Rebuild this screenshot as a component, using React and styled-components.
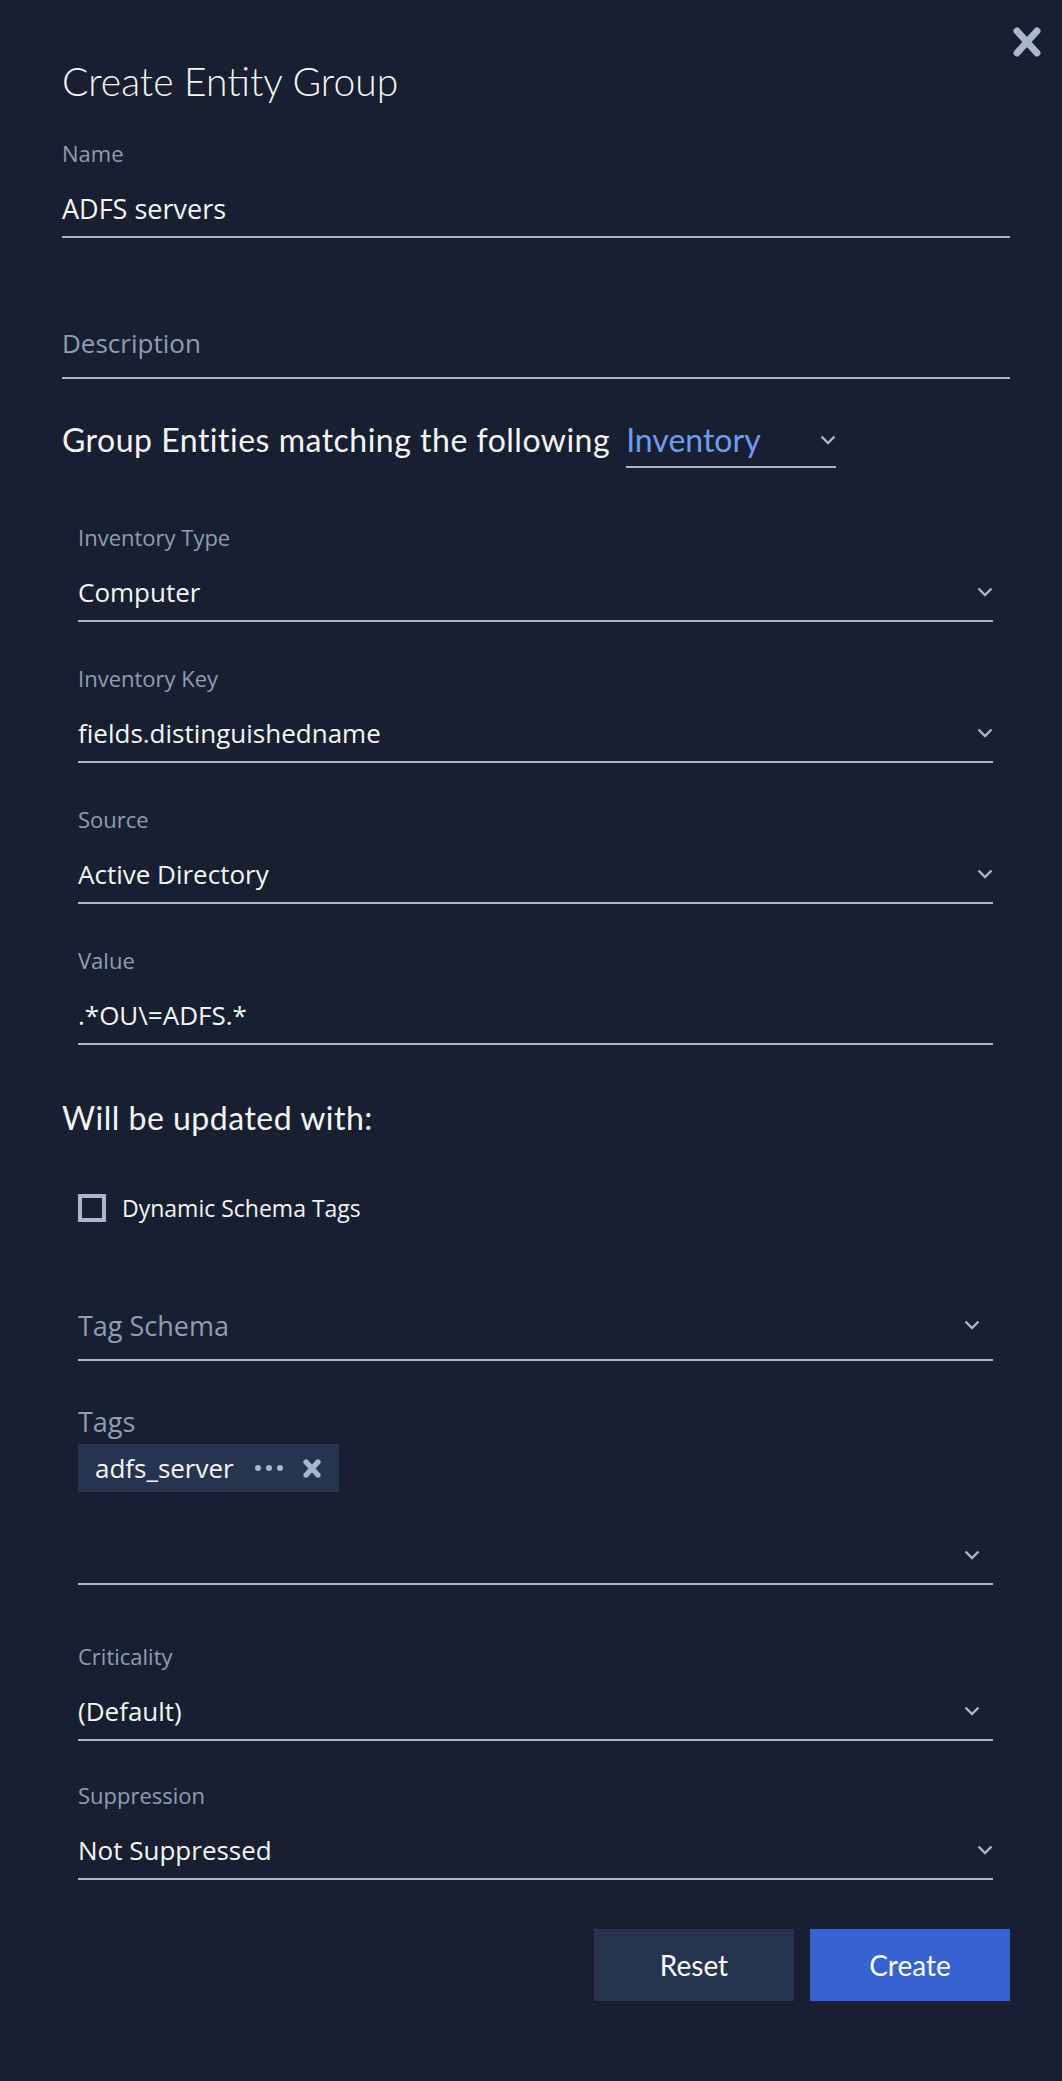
import styled, { createGlobalStyle } from "styled-components";

const GlobalStyle = createGlobalStyle`
  html, body {
    margin: 0;
    padding: 0;
    background: #181f30;
  }
  body {
    font-family: "Open Sans", Lato, sans-serif;
    color: #f4f6f9;
  }
`;

const Panel = styled.div`
  position: relative;
  box-sizing: border-box;
  width: 1062px;
  min-height: 2081px;
  padding: 57px 52px 80px 62px;
  background: #181f30;
`;

const CloseButton = styled.button`
  position: absolute;
  top: 26px;
  right: 20px;
  width: 30px;
  height: 32px;
  padding: 0;
  border: none;
  background: transparent;
  cursor: pointer;
`;

const Title = styled.h1`
  margin: 0;
  font-family: Lato, sans-serif;
  font-size: 39px;
  line-height: 48px;
  font-weight: 300;
  color: #f4f6f9;
`;

const Field = styled.div`
  margin-top: ${(p) => p.$mt ?? 43}px;
`;

const Label = styled.label`
  display: block;
  height: 26px;
  margin-bottom: 14px;
  font-size: 22px;
  line-height: 26px;
  color: #8e9eb4;
`;

const Control = styled.div`
  display: flex;
  align-items: center;
  justify-content: space-between;
  box-sizing: content-box;
  height: ${(p) => p.$h ?? 56}px;
  padding-bottom: ${(p) => p.$pb ?? 0}px;
  padding-right: ${(p) => p.$inset ?? 0}px;
  border-bottom: 2px solid #a8b7cb;
  font-size: ${(p) => p.$size ?? 26}px;
  color: ${(p) => (p.$placeholder ? "#8e9eb4" : "#f4f6f9")};
`;

const HeadingRow = styled.div`
  display: flex;
  align-items: flex-start;
  margin-top: 41px;
`;

const Heading = styled.h2`
  margin: ${(p) => p.$mt ?? 0}px 0 0;
  font-family: Lato, sans-serif;
  font-size: 32px;
  line-height: 40px;
  font-weight: 400;
  letter-spacing: 0.5px;
  color: #f4f6f9;
`;

const InlineSelect = styled.div`
  display: flex;
  align-items: center;
  justify-content: space-between;
  width: 210px;
  margin-left: 16px;
  padding-bottom: 6px;
  border-bottom: 2px solid #a8b7cb;
  font-family: Lato, sans-serif;
  font-size: 32px;
  line-height: 40px;
  color: #6e9cf0;
`;

const Indented = styled.div`
  padding: 0 17px 0 16px;
  margin-top: ${(p) => p.$mt ?? 0}px;
`;

const CheckRow = styled.label`
  display: flex;
  align-items: center;
  gap: 16px;
  height: 28px;
  margin-top: 56px;
  font-size: 23px;
  line-height: 28px;
  color: #f4f6f9;
`;

const CheckBox = styled.span`
  box-sizing: border-box;
  width: 28px;
  height: 28px;
  border: 4px solid #a8b7cb;
`;

const TagsLabel = styled.div`
  font-size: 27px;
  line-height: 30px;
  color: #8e9eb4;
`;

const Chip = styled.div`
  display: inline-flex;
  align-items: center;
  height: 48px;
  margin-top: 7px;
  padding: 0 18px 0 17px;
  background: #263450;
  font-size: 26px;
  color: #f4f6f9;
`;

const ChipDots = styled.span`
  display: flex;
  gap: 5px;
  margin: 0 20px 0 21px;

  i {
    width: 6px;
    height: 6px;
    border-radius: 50%;
    background: #a8b7cb;
  }
`;

const Actions = styled.div`
  display: flex;
  justify-content: flex-end;
  gap: 16px;
  margin-top: 49px;
`;

const Button = styled.button`
  width: 200px;
  height: 72px;
  border: none;
  font-family: Lato, sans-serif;
  font-size: 28px;
  color: #ffffff;
  background: ${(p) => (p.$primary ? "#3563d1" : "#263450")};
  cursor: pointer;
`;

function Chevron() {
  return (
    <svg width="16" height="10" viewBox="0 0 16 10">
      <polyline points="1.5,1.5 8,8 14.5,1.5" fill="none" stroke="#a8b7cb" strokeWidth="2.4" />
    </svg>
  );
}

function CrossIcon({ size = 30, height = 32, stroke = 7 }) {
  return (
    <svg width={size} height={height} viewBox="0 0 30 32">
      <path d="M5 5 L25 27 M25 5 L5 27" stroke="#a8b7cb" strokeWidth={stroke} strokeLinecap="round" />
    </svg>
  );
}

function SelectField({ label, value, placeholder, inset, mt }) {
  return (
    <Field $mt={mt}>
      <Label>{label}</Label>
      <Control $inset={inset} $placeholder={!value}>
        <span>{value || placeholder}</span>
        <Chevron />
      </Control>
    </Field>
  );
}

export default function App() {
  return (
    <>
      <GlobalStyle />
      <Panel>
        <CloseButton aria-label="Close">
          <CrossIcon />
        </CloseButton>
        <Title>Create Entity Group</Title>

        <Field $mt={35}>
          <Label>Name</Label>
          <Control $size={27}>ADFS servers</Control>
        </Field>

        <Field>
          <Label />
          <Control $placeholder $h={44} $pb={12}>Description</Control>
        </Field>

        <HeadingRow>
          <Heading>Group Entities matching the following</Heading>
          <InlineSelect>
            <span>Inventory</span>
            <Chevron />
          </InlineSelect>
        </HeadingRow>

        <Indented $mt={56}>
          <SelectField mt={0} label="Inventory Type" value="Computer" />
          <SelectField label="Inventory Key" value="fields.distinguishedname" />
          <SelectField label="Source" value="Active Directory" />
          <Field>
            <Label>Value</Label>
            <Control>.*OU\=ADFS.*</Control>
          </Field>
        </Indented>

        <Heading $mt={53}>Will be updated with:</Heading>

        <Indented>
          <CheckRow>
            <CheckBox />
            Dynamic Schema Tags
          </CheckRow>

          <Field $mt={41}>
            <Label />
            <Control $placeholder $inset={13} $h={44} $pb={12} $size={27}>
              <span>Tag Schema</span>
              <Chevron />
            </Control>
          </Field>

          <Field $mt={46}>
            <TagsLabel>Tags</TagsLabel>
            <Chip>
              adfs_server
              <ChipDots>
                <i />
                <i />
                <i />
              </ChipDots>
              <CrossIcon size={18} height={19} stroke={9} />
            </Chip>
            <Field $mt={35}>
              <Control $inset={13}>
                <span />
                <Chevron />
              </Control>
            </Field>
          </Field>

          <SelectField mt={58} label="Criticality" value="(Default)" inset={13} />
          <SelectField mt={41} label="Suppression" value="Not Suppressed" />
        </Indented>

        <Actions>
          <Button>Reset</Button>
          <Button $primary>Create</Button>
        </Actions>
      </Panel>
    </>
  );
}
